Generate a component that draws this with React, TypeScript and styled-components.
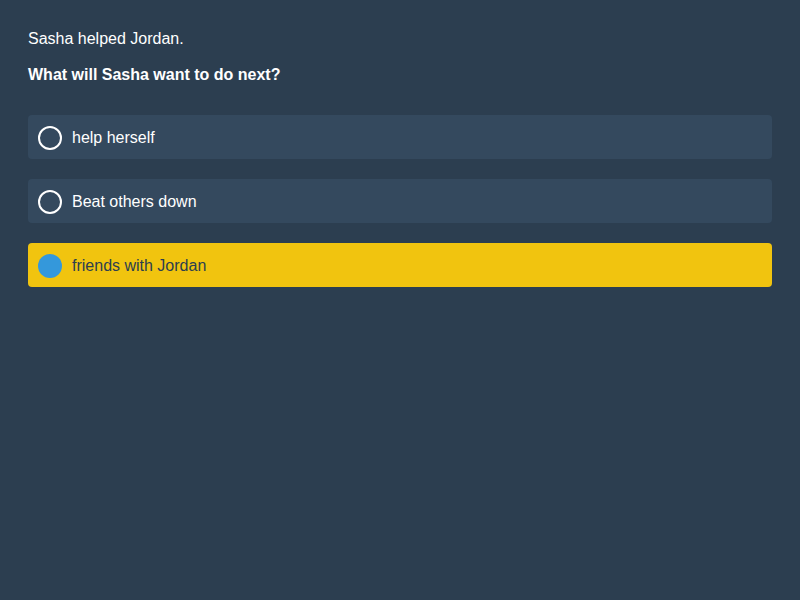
import React from 'react';
import styled, { createGlobalStyle } from 'styled-components';

const GlobalStyle = createGlobalStyle`
  html, body {
    margin: 0;
    padding: 0;
    background: #2c3e50;
    font-family: "Liberation Sans", Arial, sans-serif;
  }
`;

const Page = styled.div`
  min-height: 600px;
  box-sizing: border-box;
  padding: 29px 28px 28px;
  background: #2c3e50;
  color: #ffffff;
`;

const Passage = styled.p`
  margin: 0;
  font-size: 16px;
  line-height: 20px;
`;

const Question = styled.p`
  margin: 16px 0 0 0;
  font-size: 16px;
  line-height: 20px;
  font-weight: 700;
`;

const Options = styled.ul`
  list-style: none;
  margin: 30px 0 0 0;
  padding: 0;
  display: flex;
  flex-direction: column;
  gap: 20px;
`;

const Option = styled.li<{ $selected?: boolean }>`
  display: flex;
  align-items: center;
  gap: 10px;
  height: 44px;
  box-sizing: border-box;
  padding: 1px 10px 0;
  border-radius: 4px;
  cursor: pointer;
  background: ${(p) => (p.$selected ? '#f1c40f' : '#34495e')};
  color: ${(p) => (p.$selected ? '#2c3e50' : '#ffffff')};
  font-size: 16px;
`;

const Radio = styled.span<{ $selected?: boolean }>`
  width: 24px;
  height: 24px;
  box-sizing: border-box;
  border-radius: 50%;
  flex-shrink: 0;
  border: ${(p) => (p.$selected ? 'none' : '2px solid #ffffff')};
  background: ${(p) => (p.$selected ? '#3498db' : 'transparent')};
`;

const answers = ['help herself', 'Beat others down', 'friends with Jordan'];

export default function App() {
  const selected = 2;
  return (
    <>
      <GlobalStyle />
      <Page>
        <Passage>Sasha helped Jordan.</Passage>
        <Question>What will Sasha want to do next?</Question>
        <Options>
          {answers.map((a, i) => (
            <Option key={a} $selected={i === selected}>
              <Radio $selected={i === selected} />
              {a}
            </Option>
          ))}
        </Options>
      </Page>
    </>
  );
}
